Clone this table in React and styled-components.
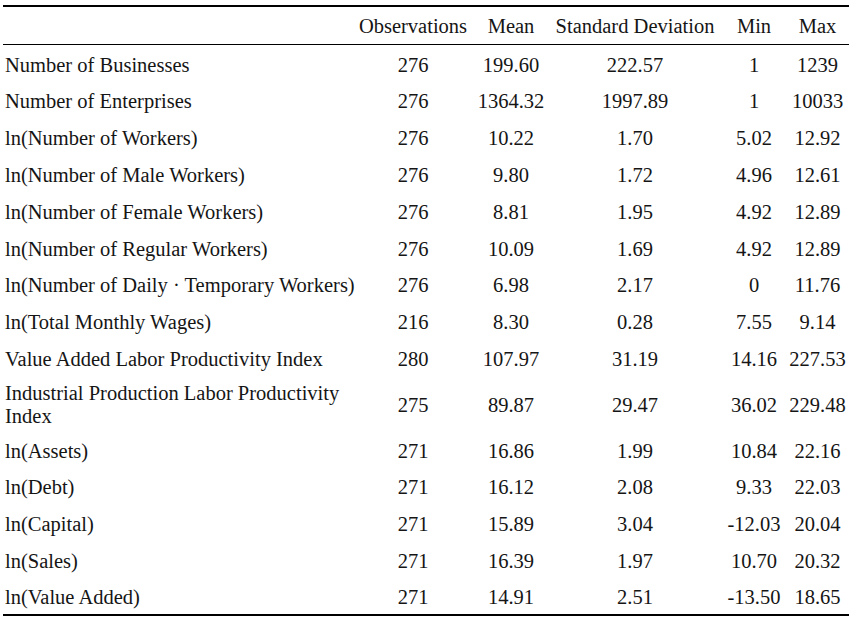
import React from "react";
import styled, { createGlobalStyle } from "styled-components";

const GlobalStyle = createGlobalStyle`
  html, body {
    margin: 0;
    padding: 0;
    background: #ffffff;
  }
`;

const Page = styled.div`
  padding: 5px 5px 0 3px;
  background: #ffffff;
`;

const Table = styled.table`
  width: 846px;
  border-collapse: collapse;
  table-layout: fixed;
  font-family: "Liberation Serif", "Times New Roman", serif;
  font-size: 20.5px;
  line-height: 23px;
  color: #151515;
  border-top: 2px solid #000;
  border-bottom: 2px solid #000;
`;

const HeadRow = styled.tr`
  border-bottom: 1px solid #000;
`;

const Th = styled.th`
  font-weight: normal;
  height: 35px;
  padding: 2px 0 0;
  text-align: ${(p) => (p.$left ? "left" : "center")};
  vertical-align: middle;
  white-space: nowrap;
`;

const Row = styled.tr`
  height: ${(p) => (p.$tall ? "54.5px" : "36.85px")};
`;

const Label = styled.td`
  padding: 4px 0 0 2px;
  text-align: left;
  vertical-align: middle;
  white-space: ${(p) => (p.$wrap ? "normal" : "nowrap")};
`;

const Num = styled.td`
  padding: 4px 0 0;
  text-align: center;
  vertical-align: middle;
  white-space: nowrap;
`;

const columns = [349, 122, 74, 174, 64, 63];

const rows = [
  ["Number of Businesses", "276", "199.60", "222.57", "1", "1239"],
  ["Number of Enterprises", "276", "1364.32", "1997.89", "1", "10033"],
  ["ln(Number of Workers)", "276", "10.22", "1.70", "5.02", "12.92"],
  ["ln(Number of Male Workers)", "276", "9.80", "1.72", "4.96", "12.61"],
  ["ln(Number of Female Workers)", "276", "8.81", "1.95", "4.92", "12.89"],
  ["ln(Number of Regular Workers)", "276", "10.09", "1.69", "4.92", "12.89"],
  ["ln(Number of Daily \u00b7 Temporary Workers)", "276", "6.98", "2.17", "0", "11.76"],
  ["ln(Total Monthly Wages)", "216", "8.30", "0.28", "7.55", "9.14"],
  ["Value Added Labor Productivity Index", "280", "107.97", "31.19", "14.16", "227.53"],
  ["Industrial Production Labor Productivity Index", "275", "89.87", "29.47", "36.02", "229.48", true],
  ["ln(Assets)", "271", "16.86", "1.99", "10.84", "22.16"],
  ["ln(Debt)", "271", "16.12", "2.08", "9.33", "22.03"],
  ["ln(Capital)", "271", "15.89", "3.04", "-12.03", "20.04"],
  ["ln(Sales)", "271", "16.39", "1.97", "10.70", "20.32"],
  ["ln(Value Added)", "271", "14.91", "2.51", "-13.50", "18.65"],
];

export default function App() {
  return (
    <Page>
      <GlobalStyle />
      <Table>
        <colgroup>
          {columns.map((w, i) => (
            <col key={i} style={{ width: w }} />
          ))}
        </colgroup>
        <thead>
          <HeadRow>
            <Th $left></Th>
            <Th>Observations</Th>
            <Th>Mean</Th>
            <Th>Standard Deviation</Th>
            <Th>Min</Th>
            <Th>Max</Th>
          </HeadRow>
        </thead>
        <tbody>
          {rows.map((r) => (
            <Row key={r[0]} $tall={r[6]}>
              <Label $wrap={r[6]}>{r[0]}</Label>
              <Num>{r[1]}</Num>
              <Num>{r[2]}</Num>
              <Num>{r[3]}</Num>
              <Num>{r[4]}</Num>
              <Num>{r[5]}</Num>
            </Row>
          ))}
        </tbody>
      </Table>
    </Page>
  );
}
